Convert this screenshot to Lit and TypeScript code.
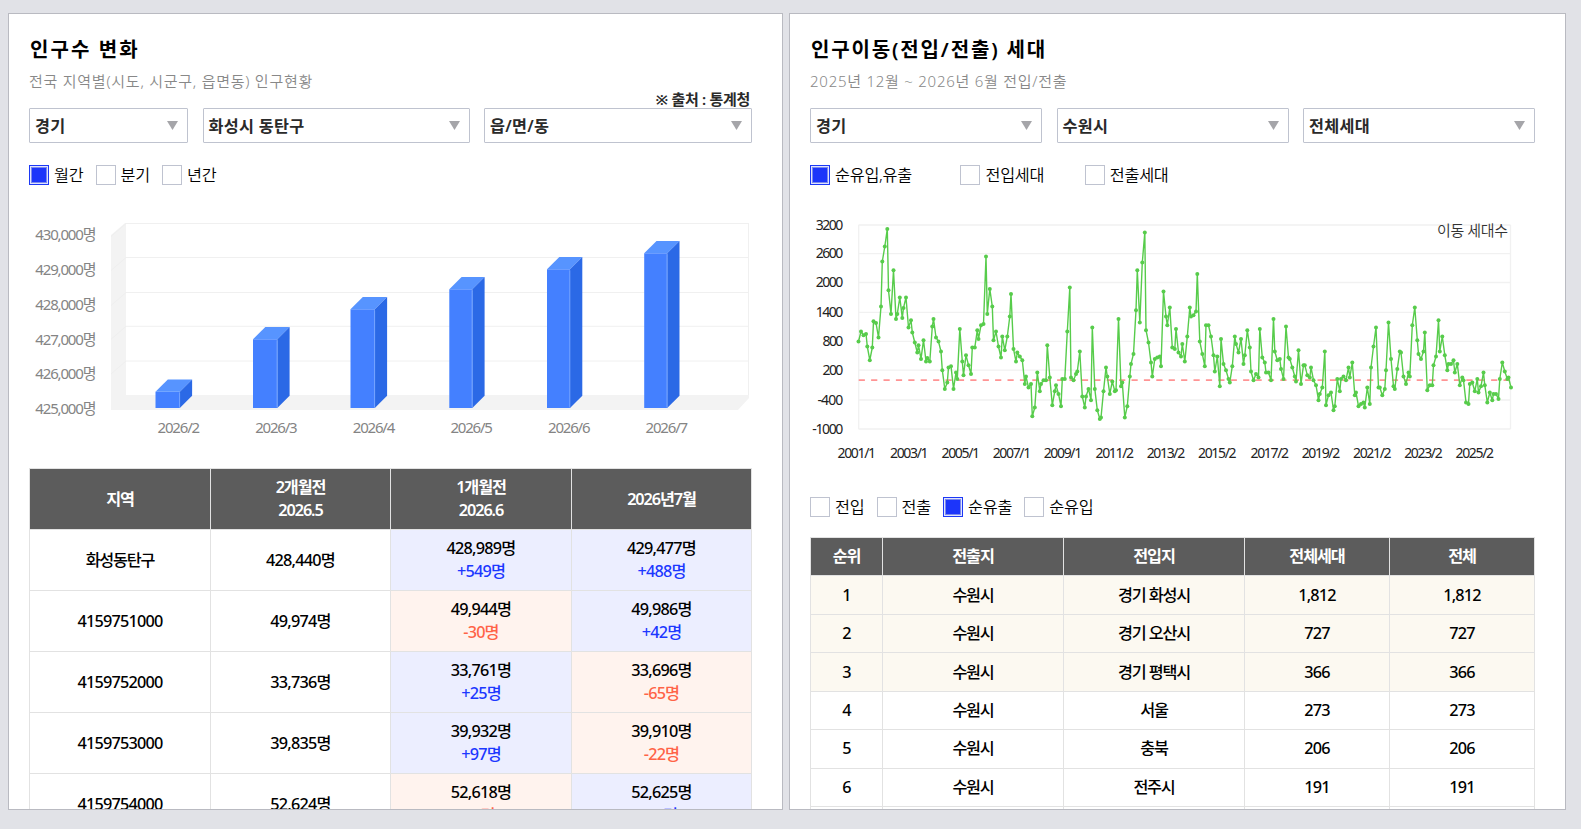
import { LitElement, html, svg, css } from "lit";
import { customElement, property } from "lit/decorators.js";
import { classMap } from "lit/directives/class-map.js";

type Option = { label: string; checked?: boolean };

@customElement("select-box")
class SelectBox extends LitElement {
  @property() label = "";
  static styles = css`
    :host {
      display: flex; align-items: center; justify-content: space-between;
      box-sizing: border-box; height: 35px; padding: 0 9px 2px 5px;
      border: 1px solid #bfc3cf; border-radius: 1px; background: #fff;
      color: #2a2a2a; font-weight: 600; font-size: 16.25px; letter-spacing: 0.3px;
    }
    .arrow { width: 11px; height: 9px; fill: #a5a5a9; display: block; margin-top: 1px; }
  `;
  render() {
    return html`<span>${this.label}</span>
      <svg class="arrow" viewBox="0 0 11 9"><path d="M0 0H11L5.5 9Z" /></svg>`;
  }
}

@customElement("check-group")
class CheckGroup extends LitElement {
  @property({ attribute: false }) options: Option[] = [];
  static styles = css`
    :host { display: flex; height: 20px; column-gap: var(--check-gap, 12px); }
    .item { display: flex; align-items: center; gap: 5px; color: #000; font-size: 16.25px; font-weight: 350;
      letter-spacing: var(--check-ls, -0.2px); white-space: nowrap; line-height: 20px; }
    .item:first-child { margin-right: var(--first-gap, 0); }
    .box { box-sizing: border-box; width: 20px; height: 20px; border: 1px solid #bfc3d0; background: #fff; }
    .on { border-color: #1c38f5; background: #1c35fa; box-shadow: inset 0 0 0 1px #dfe3ff, inset 0 0 0 2px #7b89ec; }
  `;
  render() {
    return this.options.map(
      (o) => html`<span class="item"><i class=${classMap({ box: true, on: !!o.checked })}></i>${o.label}</span>`
    );
  }
}

@customElement("population-chart")
class PopulationChart extends LitElement {
  static styles = css`
    :host { display: block; }
    .chart { display: block; }
    .wall { fill: #f3f3f3; }
    .line { stroke: #f0f0f0; fill: none; }
    .side-line { stroke: #efefef; }
    .label { fill: #848484; font-size: 15px; font-weight: 380; }
    .front { fill: #4480ff; }
    .edge { stroke: #75a4ff; }
    .top { fill: #5794ff; }
    .side { fill: #2b69e6; }
  `;
  private bars = [
    { label: "2026/2", x: 155.5, y: 391.7 },
    { label: "2026/3", x: 253, y: 339.3 },
    { label: "2026/4", x: 350.5, y: 309.3 },
    { label: "2026/5", x: 449.3, y: 289.3 },
    { label: "2026/6", x: 547, y: 269.3 },
    { label: "2026/7", x: 644.2, y: 253.2 },
  ];
  private ticks = ["430,000명", "429,000명", "428,000명", "427,000명", "426,000명", "425,000명"];
  render() {
    return html`<svg class="chart" width="723" height="283" viewBox="29 185 723 283">
      <path class="wall" d="M111 235L125 223H126V395H749V398L738 410H111Z" />
      ${[223.5, 257.5, 292.5, 326.3, 361].map(
        (y) => svg`<path class="line" d="M126 ${y}H749" /><path class="side-line" d="M111 ${y + 13}L126 ${y}" />`
      )}
      <path class="line" d="M748.5 223V395" />
      ${this.bars.map((b) => {
        const r = b.label === "2026/5" || b.label === "2026/6" || b.label === "2026/7" ? b.x + 23 : b.x + 24.3;
        return svg`
          <path class="front" d="M${b.x} ${b.y}H${r}V408H${b.x}Z" />
          <path class="top" d="M${b.x} ${b.y}L${b.x + 12.3} ${b.y - 12.3}H${r + 12.3}L${r} ${b.y}Z" />
          <path class="side" d="M${r} ${b.y}L${r + 12.3} ${b.y - 12.3}V395.7L${r} 408Z" />
          <path class="edge" d="M${r - 0.2} ${b.y + 1}V407.5" />`;
      })}
      ${this.ticks.map(
        (t, i) => svg`<text class="label" x="35.3" y=${240.2 + i * 34.8} textLength="61.2">${t}</text>`
      )}
      ${this.bars.map(
        (b, i) => svg`<text class="label" x=${157.6 + i * 97.6} y="433" textLength="42.5">${b.label}</text>`
      )}
    </svg>`;
  }
}

// Monthly values, January 2001 onward, stored in thirds of a pixel below the plot origin.
const MONTHS = [
  394, 364, 375, 371, 409, 450, 412, 333, 338, 382, 289, 154, 109, 56, 240, 311, 180, 326, 311, 262,
  323, 293, 262, 352, 330, 367, 397, 427, 405, 446, 390, 454, 443, 454, 349, 326, 382, 394, 424, 480,
  536, 517, 472, 468, 536, 487, 506, 356, 454, 495, 435, 465, 491, 412, 412, 360, 386, 345, 341, 139,
  311, 236, 289, 390, 364, 409, 442, 379, 420, 379, 319, 251, 416, 454, 427, 439, 450, 521, 499, 532,
  521, 618, 592, 487, 543, 521, 510, 510, 405, 502, 585, 543, 525, 551, 588, 506, 506, 364, 232, 502,
  510, 491, 484, 424, 559, 592, 559, 536, 570, 352, 536, 600, 626, 622, 543, 472, 499, 551, 514, 543,
  540, 326, 528, 517, 622, 588, 499, 461, 431, 300, 180, 337, 157, 67, 360, 397, 457, 499, 446, 442,
  439, 468, 244, 319, 345, 292, 412, 416, 356, 427, 439, 401, 454, 379, 292, 319, 315, 304, 191, 394,
  431, 468, 345, 345, 379, 435, 484, 439, 528, 386, 461, 480, 506, 517, 468, 379, 401, 427, 386, 461,
  435, 360, 412, 484, 510, 491, 502, 356, 442, 457, 487, 487, 510, 326, 424, 450, 446, 476, 506, 349,
  442, 446, 472, 499, 514, 420, 521, 465, 465, 495, 502, 472, 510, 525, 570, 551, 532, 424, 585, 555,
  547, 600, 588, 506, 543, 506, 499, 510, 472, 502, 457, 555, 547, 588, 581, 577, 592, 532, 581, 472,
  409, 352, 532, 532, 555, 536, 480, 337, 446, 528, 536, 476, 424, 427, 499, 521, 487, 499, 345, 292,
  390, 431, 446, 424, 367, 540, 525, 525, 465, 439, 330, 424, 379, 435, 480, 461, 461, 450, 487, 461,
  525, 502, 510, 577, 581, 521, 517, 543, 506, 547, 528, 487, 525, 577, 547, 570, 551, 551, 566, 506,
  457, 484, 506, 502, 532,
];

@customElement("migration-chart")
class MigrationChart extends LitElement {
  static styles = css`
    :host { display: block; }
    .chart { display: block; }
    .line { stroke: #f1f1f1; stroke-width: 1.3; fill: none; }
    .zero { stroke: #ff9494; stroke-width: 1.7; stroke-dasharray: 6.2 6.2; }
    .series { stroke: #57cc4b; stroke-width: 1.4; fill: none; stroke-linejoin: round; }
    .dot { fill: #57cc4b; }
    .label { fill: #222; font-size: 14px; font-weight: 380; }
    .legend { fill: #333; font-size: 15px; font-weight: 350; }
  `;
  private yTicks: [string, number, number][] = [
    ["3200", 225, 27.5], ["2600", 253.7, 27.5], ["2000", 282.5, 27.5], ["1400", 312.3, 27.5],
    ["800", 341.3, 20.8], ["200", 370.2, 20.8], ["-400", 400, 25.8], ["-1000", 429, 31],
  ];
  private xTicks: [string, number][] = [
    ["2001/1", 856.5], ["2003/1", 909], ["2005/1", 960.5], ["2007/1", 1011.7], ["2009/1", 1062.7],
    ["2011/2", 1114.5], ["2013/2", 1165.7], ["2015/2", 1217], ["2017/2", 1269.5], ["2019/2", 1320.7],
    ["2021/2", 1372], ["2023/2", 1423.2], ["2025/2", 1474.5],
  ];
  render() {
    const pts = MONTHS.map((v, i) => [858.5 + 1.25 * Math.floor(i * 1.7158 + 0.9), 210.2 + v / 3]);
    return html`<svg class="chart" width="725" height="312" viewBox="810 185 725 312">
      ${this.yTicks.map(([, y]) => svg`<path class="line" d="M858.5 ${y}H1510.5" />`)}
      <path class="line" d="M858.7 225V429M1510.5 225V429" />
      <path class="zero" d="M858.7 380.2H1510.5" />
      <path class="series" d=${"M" + pts.map((p) => p.map((n) => n.toFixed(1)).join(" ")).join("L")} />
      ${pts.map((p) => svg`<circle class="dot" cx=${p[0].toFixed(1)} cy=${p[1].toFixed(1)} r="2" />`)}
      ${this.yTicks.map(
        ([t, y, w]) => svg`<text class="label" x=${843.3 - w} y=${y + 4.6} textLength=${w}>${t}</text>`
      )}
      ${this.xTicks.map(([t, x]) => svg`<text class="label" x=${x - 19} y="458.3" textLength="38.5">${t}</text>`)}
      <text class="legend" x="1437" y="236" textLength="71">이동 세대수</text>
    </svg>`;
  }
}

@customElement("app-root")
class AppRoot extends LitElement {
  static styles = css`
    :host {
      display: flex; gap: 6px; box-sizing: border-box; height: 829px; padding: 13px 15px 19px 8px;
      background: #e1e2e7; overflow: hidden;
      font-family: "Noto Sans", "Noto Sans CJK KR", sans-serif;
    }
    .panel { box-sizing: border-box; border: 1px solid #b9bac1; background: #fff; padding: 21px 30px 0 20px; overflow: hidden; }
    .population { width: 775px; }
    .migration { width: 777px; }
    .title { margin: 0; height: 30px; line-height: 30px; font-size: 20px; font-weight: 600; letter-spacing: 1.85px; color: #000; white-space: nowrap; padding-left: 1px; }
    .population .title { letter-spacing: 2.1px; }
    .sub { display: flex; justify-content: space-between; height: 43px; white-space: nowrap; }
    .desc { line-height: 32px; font-size: 15px; font-weight: 350; letter-spacing: 0.75px; color: #888; }
    .source { align-self: flex-end; line-height: 18px; font-size: 15px; font-weight: 600; letter-spacing: -0.3px; color: #2a2a2a; padding-right: 2px; }
    .selects { display: grid; column-gap: 14.5px; margin-bottom: 22px; }
    .population .selects { grid-template-columns: 159px 267px 268px; width: 723px; }
    .migration .selects { grid-template-columns: repeat(3, 1fr); width: 725px; }
    .modes { --check-gap: 40.5px; --first-gap: 8px; --check-ls: -0.25px; }
    .kinds { margin-bottom: 20px; }
    .grid { display: grid; border: solid #e2e2e2; border-width: 1px 0 0 1px; box-sizing: border-box;
      text-align: center; font-size: 16.25px; font-weight: 500; letter-spacing: -0.8px; line-height: 23px; color: #000; }
    .ko { letter-spacing: -1.2px; }
    .trend { width: 723px; grid-template-columns: 181px 180px 181px 180px; grid-auto-rows: 61px; }
    .ranks { width: 725px; grid-template-columns: 72px 181px 181px 145px 145px; grid-auto-rows: 38.45px; }
    .cell { box-sizing: border-box; display: flex; flex-direction: column; align-items: center; justify-content: center;
      border: solid #e2e2e2; border-width: 0 1px 1px 0; }
    .head { background: #5c5c5c; color: #fff; font-weight: 600; letter-spacing: -1.1px; }
    .up { background: #eceeff; }
    .down { background: #fff3ee; }
    .up .diff { color: #1c38ff; }
    .down .diff { color: #ff6347; }
    .best { background: #fcf9f1; }
  `;

  private heads = [["지역"], ["2개월전", "2026.5"], ["1개월전", "2026.6"], ["2026년7월"]];
  private regions: string[][] = [
    ["화성동탄구", "428,440명", "428,989명", "+549명", "429,477명", "+488명"],
    ["4159751000", "49,974명", "49,944명", "-30명", "49,986명", "+42명"],
    ["4159752000", "33,736명", "33,761명", "+25명", "33,696명", "-65명"],
    ["4159753000", "39,835명", "39,932명", "+97명", "39,910명", "-22명"],
    ["4159754000", "52,624명", "52,618명", "-6명", "52,625명", "+7명"],
  ];
  private flows: string[][] = [
    ["1", "수원시", "경기 화성시", "1,812", "1,812"],
    ["2", "수원시", "경기 오산시", "727", "727"],
    ["3", "수원시", "경기 평택시", "366", "366"],
    ["4", "수원시", "서울", "273", "273"],
    ["5", "수원시", "충북", "206", "206"],
    ["6", "수원시", "전주시", "191", "191"],
    ["", "", "", "", ""],
  ];

  private change(value: string, diff: string) {
    const up = diff.startsWith("+");
    return html`<div class=${classMap({ cell: true, up, down: !up })}>
      <span>${value}</span><span class="diff">${diff}</span>
    </div>`;
  }

  render() {
    return html`
      <section class="panel population">
        <h2 class="title">인구수 변화</h2>
        <div class="sub">
          <span class="desc">전국 지역별(시도, 시군구, 읍면동) 인구현황</span>
          <span class="source">※ 출처 : 통계청</span>
        </div>
        <div class="selects">
          <select-box label="경기"></select-box>
          <select-box label="화성시 동탄구"></select-box>
          <select-box label="읍/면/동"></select-box>
        </div>
        <check-group .options=${[{ label: "월간", checked: true }, { label: "분기" }, { label: "년간" }]}></check-group>
        <population-chart></population-chart>
        <div class="grid trend">
          ${this.heads.map((h) => html`<div class="cell head">${h.map((t) => html`<span>${t}</span>`)}</div>`)}
          ${this.regions.map(
            (r, i) => html`<div class=${classMap({ cell: true, ko: i === 0 })}>${r[0]}</div>
              <div class="cell">${r[1]}</div>
              ${this.change(r[2], r[3])}${this.change(r[4], r[5])}`
          )}
        </div>
      </section>
      <section class="panel migration">
        <h2 class="title">인구이동(전입/전출) 세대</h2>
        <div class="sub"><span class="desc">2025년 12월 ~ 2026년 6월 전입/전출</span></div>
        <div class="selects">
          <select-box label="경기"></select-box>
          <select-box label="수원시"></select-box>
          <select-box label="전체세대"></select-box>
        </div>
        <check-group class="modes"
          .options=${[{ label: "순유입,유출", checked: true }, { label: "전입세대" }, { label: "전출세대" }]}></check-group>
        <migration-chart></migration-chart>
        <check-group class="kinds"
          .options=${[{ label: "전입" }, { label: "전출" }, { label: "순유출", checked: true }, { label: "순유입" }]}></check-group>
        <div class="grid ranks">
          ${["순위", "전출지", "전입지", "전체세대", "전체"].map((t) => html`<div class="cell head">${t}</div>`)}
          ${this.flows.map((row, i) =>
            row.map((t, c) => html`<div class=${classMap({ cell: true, best: i < 3, ko: c === 1 || c === 2 })}>${t}</div>`)
          )}
        </div>
      </section>
    `;
  }
}
